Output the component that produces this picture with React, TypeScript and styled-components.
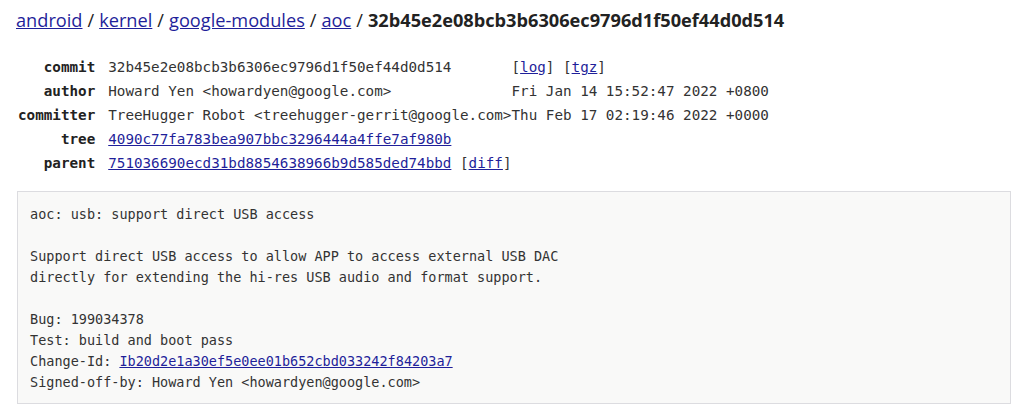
import React from "react";
import styled, { createGlobalStyle } from "styled-components";

const Global = createGlobalStyle`
  html, body { margin: 0; padding: 0; background: #fff; }
  body { font-family: "Open Sans", "Liberation Sans", sans-serif; color: #222; }
`;

const Page = styled.div`
  padding: 6px 13px 0 16px;
`;

const Title = styled.h1`
  margin: 0;
  font-size: 18.2px;
  line-height: 28px;
  font-weight: 400;
  color: #222;
`;

const Crumb = styled.a`
  color: #1f1f9a;
  text-decoration: underline;
`;

const Sep = styled.span`
  padding: 0 5px;
`;

const Current = styled.span`
  font-weight: 700;
`;

const Meta = styled.table`
  margin-top: 21px;
  border-collapse: collapse;
  font-family: "DejaVu Sans Mono", "Liberation Mono", monospace;
  font-size: 14.25px;
  color: #333;
`;

const Row = styled.tr`
  height: 24px;
`;

const Label = styled.th`
  text-align: right;
  font-weight: 700;
  padding: 0 13px 0 2px;
  color: #222;
  white-space: nowrap;
`;

const Cell = styled.td`
  padding: 0;
  white-space: nowrap;
`;

const Link = styled.a`
  color: #1f1f9a;
  text-decoration: underline;
`;

const Message = styled.pre`
  margin: 16px 0 0 1px;
  border: 1px solid #dcdce0;
  background: #f9f9f8;
  padding: 12px 12px 10px 12px;
  font-family: "DejaVu Sans Mono", "Liberation Mono", monospace;
  font-size: 13.5px;
  line-height: 21px;
  color: #333;
`;

export default function App() {
  return (
    <>
      <Global />
      <Page>
        <Title>
          <Crumb href="#">android</Crumb>
          <Sep>/</Sep>
          <Crumb href="#">kernel</Crumb>
          <Sep>/</Sep>
          <Crumb href="#">google-modules</Crumb>
          <Sep>/</Sep>
          <Crumb href="#">aoc</Crumb>
          <Sep>/</Sep>
          <Current>32b45e2e08bcb3b6306ec9796d1f50ef44d0d514</Current>
        </Title>
        <Meta>
          <tbody>
            <Row>
              <Label>commit</Label>
              <Cell>32b45e2e08bcb3b6306ec9796d1f50ef44d0d514</Cell>
              <Cell>
                [<Link href="#">log</Link>] [<Link href="#">tgz</Link>]
              </Cell>
            </Row>
            <Row>
              <Label>author</Label>
              <Cell>Howard Yen &lt;howardyen@google.com&gt;</Cell>
              <Cell>Fri Jan 14 15:52:47 2022 +0800</Cell>
            </Row>
            <Row>
              <Label>committer</Label>
              <Cell>TreeHugger Robot &lt;treehugger-gerrit@google.com&gt;</Cell>
              <Cell>Thu Feb 17 02:19:46 2022 +0000</Cell>
            </Row>
            <Row>
              <Label>tree</Label>
              <Cell>
                <Link href="#">4090c77fa783bea907bbc3296444a4ffe7af980b</Link>
              </Cell>
              <Cell />
            </Row>
            <Row>
              <Label>parent</Label>
              <Cell>
                <Link href="#">751036690ecd31bd8854638966b9d585ded74bbd</Link>{" "}
                [<Link href="#">diff</Link>]
              </Cell>
              <Cell />
            </Row>
          </tbody>
        </Meta>
        <Message>
          {"aoc: usb: support direct USB access\n\nSupport direct USB access to allow APP to access external USB DAC\ndirectly for extending the hi-res USB audio and format support.\n\nBug: 199034378\nTest: build and boot pass\nChange-Id: "}
          <Link href="#">Ib20d2e1a30ef5e0ee01b652cbd033242f84203a7</Link>
          {"\nSigned-off-by: Howard Yen <howardyen@google.com>"}
        </Message>
      </Page>
    </>
  );
}
